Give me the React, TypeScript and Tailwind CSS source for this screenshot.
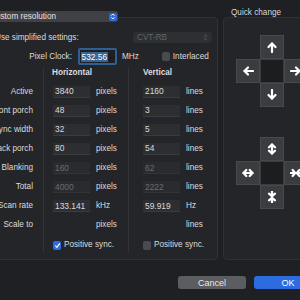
import React from "react";

type Row = {
  label: string;
  h: string;
  hDis?: boolean;
  hUnit: string;
  v: string;
  vDis?: boolean;
  vUnit: string;
  noField?: boolean;
};

const rows: Row[] = [
  { label: "Active", h: "3840", hUnit: "pixels", v: "2160", vUnit: "lines" },
  { label: "Front porch", h: "48", hUnit: "pixels", v: "3", vUnit: "lines" },
  { label: "Sync width", h: "32", hUnit: "pixels", v: "5", vUnit: "lines" },
  { label: "Back porch", h: "80", hUnit: "pixels", v: "54", vUnit: "lines" },
  { label: "Blanking", h: "160", hDis: true, hUnit: "pixels", v: "62", vDis: true, vUnit: "lines" },
  { label: "Total", h: "4000", hDis: true, hUnit: "pixels", v: "2222", vDis: true, vUnit: "lines" },
  { label: "Scan rate", h: "133.141", hUnit: "kHz", v: "59.919", vUnit: "Hz" },
  { label: "Scale to", h: "", hUnit: "pixels", v: "", vUnit: "lines", noField: true },
];

function Field({ value, disabled, hidden }: { value: string; disabled?: boolean; hidden?: boolean }) {
  if (hidden) return <div className="h-[12px] w-[37px]" />;
  return (
    <div
      className={
        disabled
          ? "h-[12px] w-[37px] bg-[#2a2b2e] border-b border-[#333437] flex items-center pl-[2px] text-[8.4px] text-[#6b6c6f]"
          : "h-[12px] w-[37px] bg-[#2d2e31] border-b border-[#3a3b3e] flex items-center pl-[2px] text-[8.4px] text-[#dadada]"
      }
    >
      {value}
    </div>
  );
}

function Arrow({ kind }: { kind: string }) {
  const common = {
    fill: "none",
    stroke: "#ffffff",
    strokeWidth: 2.2,
    strokeLinecap: "round" as const,
    strokeLinejoin: "round" as const,
  };
  let content: React.ReactNode = null;
  if (kind === "up")
    content = (
      <>
        <path d="M6 11 V2.5" {...common} />
        <path d="M2.5 6 L6 2.5 L9.5 6" {...common} />
      </>
    );
  if (kind === "down")
    content = (
      <>
        <path d="M6 1 V9.5" {...common} />
        <path d="M2.5 6 L6 9.5 L9.5 6" {...common} />
      </>
    );
  if (kind === "left")
    content = (
      <>
        <path d="M11 6 H2.5" {...common} />
        <path d="M6 2.5 L2.5 6 L6 9.5" {...common} />
      </>
    );
  if (kind === "right")
    content = (
      <>
        <path d="M1 6 H9.5" {...common} />
        <path d="M6 2.5 L9.5 6 L6 9.5" {...common} />
      </>
    );
  if (kind === "vexp")
    content = (
      <>
        <path d="M6 1.5 V10.5" {...common} />
        <path d="M3 4.3 L6 1.5 L9 4.3" {...common} />
        <path d="M3 7.7 L6 10.5 L9 7.7" {...common} />
      </>
    );
  if (kind === "hexp")
    content = (
      <>
        <path d="M1.5 6 H10.5" {...common} />
        <path d="M4.3 3 L1.5 6 L4.3 9" {...common} />
        <path d="M7.7 3 L10.5 6 L7.7 9" {...common} />
      </>
    );
  if (kind === "hshr")
    content = (
      <>
        <path d="M0.5 6 H4.8" {...common} />
        <path d="M11.5 6 H7.2" {...common} />
        <path d="M2.6 3 L5.2 6 L2.6 9" {...common} />
        <path d="M9.4 3 L6.8 6 L9.4 9" {...common} />
      </>
    );
  if (kind === "vshr")
    content = (
      <>
        <path d="M6 0.5 V4.8" {...common} />
        <path d="M6 11.5 V7.2" {...common} />
        <path d="M3 2.6 L6 5.2 L9 2.6" {...common} />
        <path d="M3 9.4 L6 6.8 L9 9.4" {...common} />
      </>
    );
  return (
    <svg width="12" height="12" viewBox="0 0 12 12">
      {content}
    </svg>
  );
}

function Cell({ kind }: { kind?: string }) {
  if (!kind) return <div className="h-[24px] w-[24px]" />;
  if (kind === "center")
    return <div className="h-[24px] w-[24px] bg-[#1c1d1f] border border-[#3a3b3e]" />;
  return (
    <div className="h-[24px] w-[24px] bg-[#3b3c3f] border border-[#48494c] flex items-center justify-center">
      <Arrow kind={kind} />
    </div>
  );
}

function Pad({ cells }: { cells: (string | undefined)[] }) {
  return (
    <div className="grid grid-cols-[24px_24px_24px] grid-rows-[24px_24px_24px] w-[72px]">
      {cells.map((c, i) => (
        <Cell key={i} kind={c} />
      ))}
    </div>
  );
}

export default function App() {
  return (
    <div className="w-[300px] h-[300px] overflow-hidden bg-[#1f2023] text-[#dcdcdc] text-[8.2px] leading-[10px] [font-family:'Liberation_Sans',Arial,sans-serif]">
      {/* header */}
      <div className="flex h-[17px]">
        <div className="relative z-10 ml-[-12px] mt-[11px] h-[11px] w-[130px] shrink-0 rounded-[3px] bg-[#404145] flex items-center pl-[2px] pr-[1px] text-[#e2e2e2]">
          <span className="flex-1">Custom resolution</span>
          <div className="h-[8px] w-[8px] rounded-[2px] bg-[#2d6be0] flex items-center justify-center">
            <svg width="6" height="7" viewBox="0 0 6 7">
              <path d="M1.3 2.6 L3 1.1 L4.7 2.6 M1.3 4.4 L3 5.9 L4.7 4.4" fill="none" stroke="#fff" strokeWidth="0.9" />
            </svg>
          </div>
        </div>
        <div className="ml-[113px] mt-[8px] text-[#d8d8d8] whitespace-nowrap">Quick change</div>
      </div>

      {/* panels */}
      <div className="flex gap-[5px] h-[243px]">
        <div className="ml-[-10px] w-[228px] shrink-0 rounded-[4px] border border-[#303134] bg-[#242528] flex flex-col">
          {/* row: simplified */}
          <div className="mt-[14px] h-[11px] flex items-center">
            <div className="w-[142px] pl-[4px] whitespace-nowrap">Use simplified settings:</div>
            <div className="h-[11px] w-[79px] rounded-[3px] bg-[#2e2f32] flex items-center pl-[4px] pr-[4px] text-[#646568]">
              <span className="flex-1">CVT-RB</span>
              <svg width="5" height="7" viewBox="0 0 5 7">
                <path d="M1 2.6 L2.5 1.2 L4 2.6 M1 4.4 L2.5 5.8 L4 4.4" fill="none" stroke="#6a6b6e" strokeWidth="0.8" />
              </svg>
            </div>
          </div>
          {/* row: pixel clock */}
          <div className="mt-[5px] h-[17px] flex items-center">
            <div className="w-[81px] text-right whitespace-nowrap">Pixel Clock:</div>
            <div className="ml-[6px] h-[17px] w-[39px] rounded-[2px] border-2 border-[#2f5f93] bg-[#1e1f22] flex items-center pl-[1px]">
              <span className="bg-[#3a6394] text-white text-[8.4px] leading-[10px] px-[0.5px]">532.56</span>
            </div>
            <div className="ml-[5px]">MHz</div>
            <div className="ml-[23px] h-[9px] w-[8px] rounded-[2px] bg-[#4a4b4f]" />
            <div className="ml-[3px]">Interlaced</div>
          </div>
          {/* columns */}
          <div className="mt-[3px] flex">
            {/* labels */}
            <div className="w-[52px] pr-[10px] flex flex-col items-end">
              <div className="h-[14px]" />
              {rows.map((r) => (
                <div key={r.label} className="h-[19.125px] flex items-center whitespace-nowrap">
                  {r.label}
                </div>
              ))}
            </div>
            {/* horizontal */}
            <div className="w-[85px] border-l border-[#323337] pl-[9px] flex flex-col">
              <div className="h-[14px] font-bold ml-[-1px]">Horizontal</div>
              {rows.map((r) => (
                <div key={r.label} className="h-[19.125px] flex items-center">
                  <Field value={r.h} disabled={r.hDis} hidden={r.noField} />
                  <div className="ml-[6px]">{r.hUnit}</div>
                </div>
              ))}
              <div className="mt-[3px] h-[14px] flex items-center">
                <div className="h-[9px] w-[8px] rounded-[2px] bg-[#2c6be0] flex items-center justify-center">
                  <svg width="7" height="7" viewBox="0 0 7 7">
                    <path d="M1.3 3.6 L2.9 5.3 L5.8 1.4" fill="none" stroke="#fff" strokeWidth="1.2" />
                  </svg>
                </div>
                <div className="ml-[3px] whitespace-nowrap">Positive sync.</div>
              </div>
            </div>
            {/* vertical */}
            <div className="w-[89px] border-l border-[#323337] pl-[14px] flex flex-col">
              <div className="h-[14px] font-bold">Vertical</div>
              {rows.map((r) => (
                <div key={r.label} className="h-[19.125px] flex items-center">
                  <Field value={r.v} disabled={r.vDis} hidden={r.noField} />
                  <div className="ml-[6px]">{r.vUnit}</div>
                </div>
              ))}
              <div className="mt-[3px] h-[14px] flex items-center">
                <div className="h-[9px] w-[8px] rounded-[2px] bg-[#4a4b4f]" />
                <div className="ml-[3px] whitespace-nowrap">Positive sync.</div>
              </div>
            </div>
          </div>
        </div>

        <div className="w-[90px] shrink-0 rounded-[4px] border border-[#303134] bg-[#242528] flex flex-col pl-[12px] pt-[17px]">
          <Pad cells={[undefined, "up", undefined, "left", "center", "right", undefined, "down", undefined]} />
          <div className="mt-[30px]">
            <Pad cells={[undefined, "vexp", undefined, "hexp", "center", "hshr", undefined, "vshr", undefined]} />
          </div>
        </div>
      </div>

      {/* buttons */}
      <div className="mt-[16px] flex pl-[178px] gap-[8px]">
        <div className="h-[13px] w-[68px] shrink-0 rounded-[3px] bg-[#5c5d60] flex items-center justify-center text-[9px] text-[#e8e8e8]">
          Cancel
        </div>
        <div className="h-[13px] w-[68px] shrink-0 rounded-[3px] bg-[#2c6be0] flex items-center justify-center text-[9px] text-white">
          OK
        </div>
      </div>
    </div>
  );
}
